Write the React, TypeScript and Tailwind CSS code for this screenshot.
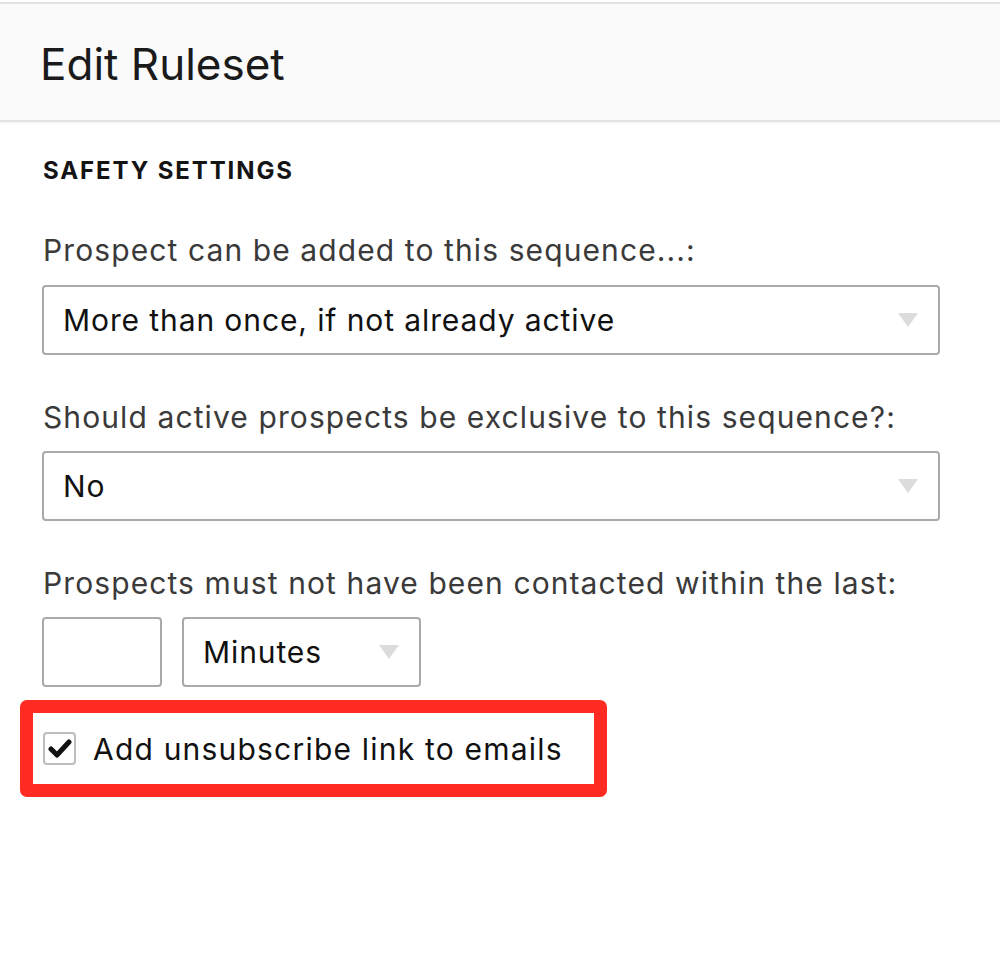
import { useState } from "react";

const FONT = "font-['Inter','Noto_Sans',sans-serif]";

function Caret() {
  return (
    <svg width="20" height="14" viewBox="0 0 20 14" className="shrink-0">
      <path d="M0 0 H20 L10 14 Z" fill="#dcdcdc" />
    </svg>
  );
}

function SelectBox({ value, className = "" }: { value: string; className?: string }) {
  return (
    <div
      className={`flex h-[70px] items-center justify-between rounded-[4px] border-2 border-[#a9a9a9] bg-white pl-[19px] pr-[20px] ${className}`}
    >
      <span className="text-[30px] leading-none tracking-[0.9px] text-[#111]">{value}</span>
      <Caret />
    </div>
  );
}

function FieldLabel({ children }: { children: string }) {
  return (
    <div className="h-[34px] text-[30px] leading-[34px] tracking-[1.1px] text-[#3a3a3a]">{children}</div>
  );
}

export default function App() {
  const [checked, setChecked] = useState(true);

  return (
    <div className={`min-h-[974px] bg-white pt-[2px] ${FONT}`}>
      {/* Header */}
      <div className="flex h-[120px] items-center border-y-2 border-[#e2e2e2] bg-[#fafafa] px-[40px] pt-[3px] shadow-[0_1px_2px_rgba(0,0,0,0.06)]">
        <h1 className="text-[44px] leading-none font-normal text-[#1a1a1a]">Edit Ruleset</h1>
      </div>

      {/* Body */}
      <div className="px-[43px] pt-[37px]">
        <h2 className="mb-[50px] text-[24px] leading-[24px] font-bold tracking-[1.9px] text-[#141414]">
          SAFETY SETTINGS
        </h2>

        <FieldLabel>Prospect can be added to this sequence...:</FieldLabel>
        <SelectBox value="More than once, if not already active" className="mt-[18px] w-[898px] -ml-px" />

        <div className="mt-[45px]">
          <FieldLabel>Should active prospects be exclusive to this sequence?:</FieldLabel>
        </div>
        <SelectBox value="No" className="mt-[17px] w-[898px] -ml-px" />

        <div className="mt-[45px]">
          <FieldLabel>Prospects must not have been contacted within the last:</FieldLabel>
        </div>
        <div className="mt-[17px] -ml-px flex gap-[20px]">
          <div className="h-[70px] w-[120px] rounded-[4px] border-2 border-[#a9a9a9] bg-white" />
          <SelectBox value="Minutes" className="w-[239px]" />
        </div>

        <div className="mt-[13px] -ml-[23px] flex h-[97px] w-[587px] items-center rounded-[7px] border-[13px] border-[#fd2b21] pl-[10px]">
          <button
            onClick={() => setChecked(!checked)}
            className="flex h-[33px] w-[33px] items-center justify-center rounded-[4px] border-2 border-[#bdbdbd] bg-white"
          >
            {checked && (
              <svg width="24" height="19" viewBox="0 0 24 19">
                <path
                  d="M3 10 L9 16 L21 3"
                  fill="none"
                  stroke="#111"
                  strokeWidth="5"
                  strokeLinecap="round"
                  strokeLinejoin="round"
                />
              </svg>
            )}
          </button>
          <span className="ml-[17px] text-[30px] leading-none tracking-[1.2px] text-[#111]">
            Add unsubscribe link to emails
          </span>
        </div>
      </div>
    </div>
  );
}
